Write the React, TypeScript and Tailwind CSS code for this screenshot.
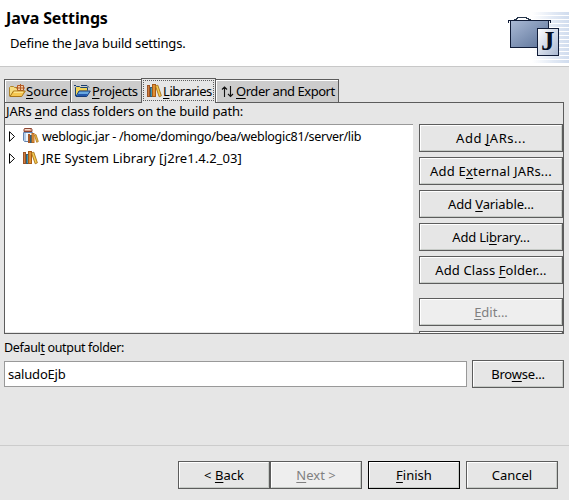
import type { ReactNode } from "react";

const U = ({ children }: { children: ReactNode }) => (
  <span className="underline decoration-1 underline-offset-2 [text-decoration-skip-ink:none]">{children}</span>
);

function Button({ children, className = "", disabled = false, primary = false }: {
  children?: ReactNode;
  className?: string;
  disabled?: boolean;
  primary?: boolean;
}) {
  return (
    <button
      disabled={disabled}
      className={`h-7 shrink-0 border ${primary ? "border-black" : "border-[#5c5c5c]"} ${disabled ? "bg-[#eeeeee] text-[#808080]" : "bg-[#e6e6e6] text-black"} ${className}`}
    >
      <span className="flex h-full items-center justify-center whitespace-pre border border-t-white border-r-[#c6cac6] border-b-[#c6cac6] border-l-white">
        <span>{children}</span>
      </span>
    </button>
  );
}

function BooksIcon() {
  return (
    <svg width="16" height="16" viewBox="0 0 16 16" className="shrink-0">
      <path d="M1 2h3v12H1z" fill="#9c5426" />
      <path d="M2 3h1v10H2z" fill="#cf7f40" />
      <path d="M4 4h3v10H4z" fill="#2f607c" />
      <path d="M5 5h1v8H5z" fill="#4c98a8" />
      <path d="M6 1h4v13H6z" fill="#a85a14" />
      <path d="M7 2h2v11H7z" fill="#e09034" />
      <path d="M9.5 3l2.3-.8 3.6 10.6-2.2 1z" fill="#f4cc50" stroke="#a87018" strokeWidth=".9" />
    </svg>
  );
}

function JarIcon() {
  return (
    <svg width="17" height="16" viewBox="0 0 17 16" className="shrink-0">
      <path d="M2.5.5h7l.5 1v2H2v-2z" fill="#dca088" stroke="#8c4430" />
      <path d="M3 1h5v1H3z" fill="#f6dccc" />
      <path d="M1.5 4.5h9v9h-8l-1-1z" fill="#edf4fa" stroke="#6484b0" />
      <path d="M2 5h2v8H2z" fill="#b4cce6" />
      <path d="M6 6h2v9H6z" fill="#a65a28" />
      <path d="M8 7h2v8H8z" fill="#2f607c" />
      <path d="M9.5 5h3v10h-3z" fill="#b8681c" />
      <path d="M10.5 6h1v8h-1z" fill="#eca048" />
      <path d="M12.5 7l1.5-.5 2.3 7-1.6.8z" fill="#f0c448" stroke="#a87018" strokeWidth=".8" />
    </svg>
  );
}

function SourceIcon() {
  return (
    <svg width="17" height="16" viewBox="0 0 17 16" className="shrink-0">
      <path d="M.5 13V4.5l1-1h3l1 1h7V13z" fill="#f5dc80" stroke="#b08428" />
      <path d="M8 2h7v6H8z" fill="#f6cca0" />
      <path d="M8.5 2.5h6v5h-6zM11.5 1v7M7 5h9" fill="none" stroke="#b05824" />
      <path d="M1 13.5L4.5 8h11.8l-3.6 5.5z" fill="#f4c650" stroke="#a87418" />
      <path d="M5 9.2h9" stroke="#ffefa4" />
    </svg>
  );
}

function ProjectsIcon() {
  return (
    <svg width="17" height="16" viewBox="0 0 17 16" className="shrink-0">
      <path d="M1.5 13V4.5l1-1h3l1 1h7V9" fill="#f4d558" stroke="#1c4470" />
      <path d="M0 2.5h2M7 2.5h6l2 2" fill="none" stroke="#183c6c" />
      <path d="M3.5 12.5l2-5h8" fill="#fff0a0" stroke="#e0b438" />
      <path d="M2 13.5L5 8h11.3l-3.5 5.5z" fill="#68a8e0" stroke="#183c78" />
      <path d="M4 11h10l-1.5 2H3z" fill="#2458ac" />
    </svg>
  );
}

function OrderIcon() {
  return (
    <svg width="13" height="14" viewBox="0 0 13 14" className="shrink-0" fill="none" stroke="#111" strokeWidth="1.1">
      <path d="M3.5 13V3M1 5.5 3.5 3 6 5.5M9.5 2v10.5M7 10l2.5 2.5L12 10" />
    </svg>
  );
}

function WizardBanner() {
  return (
    <svg width="63" height="66" viewBox="0 0 63 66" className="shrink-0" shapeRendering="crispEdges">
      <defs>
        <linearGradient id="folder" x1="0" y1="0" x2="1" y2="1">
          <stop offset="0" stopColor="#a9b9d5" />
          <stop offset="1" stopColor="#5a7197" />
        </linearGradient>
        <linearGradient id="fade">
          <stop offset="0" stopColor="#e0e8f4" stopOpacity="0" />
          <stop offset=".6" stopColor="#e0e8f4" />
          <stop offset="1" stopColor="#d0dcee" />
        </linearGradient>
        <linearGradient id="page" x1="0" y1="0" x2="1" y2="1">
          <stop offset="0" stopColor="#ffffff" />
          <stop offset="1" stopColor="#a9b8d2" />
        </linearGradient>
      </defs>
      {[12, 16, 20, 24, 28, 32, 36, 40, 44, 48, 52, 56, 60].map((y) => (
        <rect key={y} x="26" y={y} width="37" height="3" fill="url(#fade)" />
      ))}
      <path d="M8 19h2v-1h1v-1h9v1h2v1h2v1" fill="none" stroke="#27364c" />
      <path d="M4 20h39v28H4z" fill="#101c38" />
      <path d="M5 21h37v26H5z" fill="url(#folder)" />
      <path d="M2 20h43v3h-1v-2H3v2H2z" fill="#101c38" />
      <path d="M31 28h22v28H31z" fill="#101c38" />
      <path d="M32 29h20v26H32z" fill="url(#page)" />
      <text x="35" y="50" fontFamily="Liberation Serif, serif" fontSize="27" fontWeight="bold" fill="#071022">J</text>
    </svg>
  );
}

function Tab({ icon, children, className }: { icon: ReactNode; children: ReactNode; className: string }) {
  return (
    <div className={`flex h-6 items-center border border-[#5c5c5c] bg-[#cccccc] shadow-[inset_1px_1px_0_#fff] ${className}`}>
      {icon}
      <span className="whitespace-pre">{children}</span>
    </div>
  );
}

function TreeRow({ icon, children, className }: { icon: ReactNode; children: ReactNode; className: string }) {
  return (
    <div className="flex h-[22px] items-center pl-[3px]">
      <svg width="8" height="12" viewBox="0 0 8 12" className="mr-[6px] shrink-0">
        <path d="M1.5 1.7v9.6L6.5 6.5z" fill="white" stroke="black" />
      </svg>
      <span className="flex w-5">{icon}</span>
      <span className={`whitespace-pre ${className}`}>{children}</span>
    </div>
  );
}

export default function App() {
  return (
    <div className="flex h-[500px] w-[569px] flex-col overflow-hidden bg-[#e6e6e6] font-['Noto_Sans',sans-serif] text-[13px] leading-4 text-black">
      <header className="flex h-[67px] shrink-0 justify-between border-b border-[#c8c8c8] bg-white">
        <div className="pt-2 pl-[6px]">
          <h1 className="text-[16px] leading-5 font-bold tracking-[-0.12px]">Java Settings</h1>
          <p className="mt-[7px] pl-1 tracking-[-0.18px]">Define the Java build settings.</p>
        </div>
        <WizardBanner />
      </header>

      <main className="flex h-[378px] shrink-0 flex-col px-1 pt-[11px]">
        <div className="flex h-[25px] shrink-0 items-end">
          <Tab className="w-[66px] border-r-0 pl-1" icon={<SourceIcon />}><U>S</U>ource</Tab>
          <Tab className="w-[71px] border-r-0 pl-[3px] tracking-[-0.38px]" icon={<ProjectsIcon />}><span className="pl-px"><U>P</U>rojects</span></Tab>
          <div className="flex h-[25px] w-[75px] border border-b-0 border-[#5c5c5c] pt-px pl-px">
            <div className="flex h-[21px] w-[71px] items-center border border-dotted border-[#5c5c5c] pl-[2px]">
              <BooksIcon />
              <span className="whitespace-pre pl-px tracking-[-0.45px]"><U>L</U>ibraries</span>
            </div>
          </div>
          <Tab className="w-[123px] border-l-0 pl-[5px] tracking-[-0.46px]" icon={<OrderIcon />}><span className="pl-0.5"><U>O</U>rder and Export</span></Tab>
          <div className="w-[225px] self-end border-b border-[#5c5c5c]" />
        </div>
        <section className="h-[231px] w-[560px] shrink-0 overflow-hidden border border-t-0 border-[#5c5c5c]">
          <div className="h-[21px] pl-px tracking-[-0.15px]">JARs <U>a</U>nd class folders on the build path:</div>
          <div className="flex h-[209px]">
            <div className="h-[208px] w-[408px] border-t border-[#999999] bg-white">
              <TreeRow className="pt-0.5 text-[12.5px] tracking-[-0.31px]" icon={<JarIcon />}>weblogic.jar - /home/domingo/bea/weblogic81/server/lib</TreeRow>
              <TreeRow className="tracking-[0.06px]" icon={<BooksIcon />}>JRE System Library [j2re1.4.2_03]</TreeRow>
            </div>
            <div className="ml-[6px] flex w-36 flex-col gap-[5px]">
              <Button className="tracking-[0.5px]">Add <U>J</U>ARs...</Button>
              <Button className="tracking-[0.2px]">Add E<U>x</U>ternal JARs...</Button>
              <Button className="tracking-[-0.12px]">Add <U>V</U>ariable...</Button>
              <Button className="tracking-[-0.2px]">Add Li<U>b</U>rary...</Button>
              <Button className="tracking-[0.1px]">Add Class <U>F</U>older...</Button>
              <Button className="mt-[9px]" disabled><U>E</U>dit...</Button>
              <Button disabled />
            </div>
          </div>
        </section>
        <label className="mt-[6px] h-5 shrink-0 text-[12.5px] tracking-[-0.34px]">Defaul<U>t</U> output folder:</label>
        <div className="flex shrink-0 items-center gap-[5px]">
          <div className="flex h-[26px] w-[463px] items-center border border-[#999999] bg-white pl-[3px] tracking-[-0.2px]">saludoEjb</div>
          <Button className="w-[92px] tracking-[-0.2px]">Bro<U>w</U>se...</Button>
        </div>
      </main>

      <footer className="flex h-[55px] shrink-0 border-t border-[#cccccc] pt-[15px] pl-[178px]">
        <Button className="w-[92px]">&lt; <U>B</U>ack</Button>
        <Button className="w-[92px]" disabled><U>N</U>ext &gt;</Button>
        <Button className="ml-1.5 w-[92px]" primary><U>F</U>inish</Button>
        <Button className="ml-1.5 w-[92px]">Cancel</Button>
      </footer>
    </div>
  );
}
